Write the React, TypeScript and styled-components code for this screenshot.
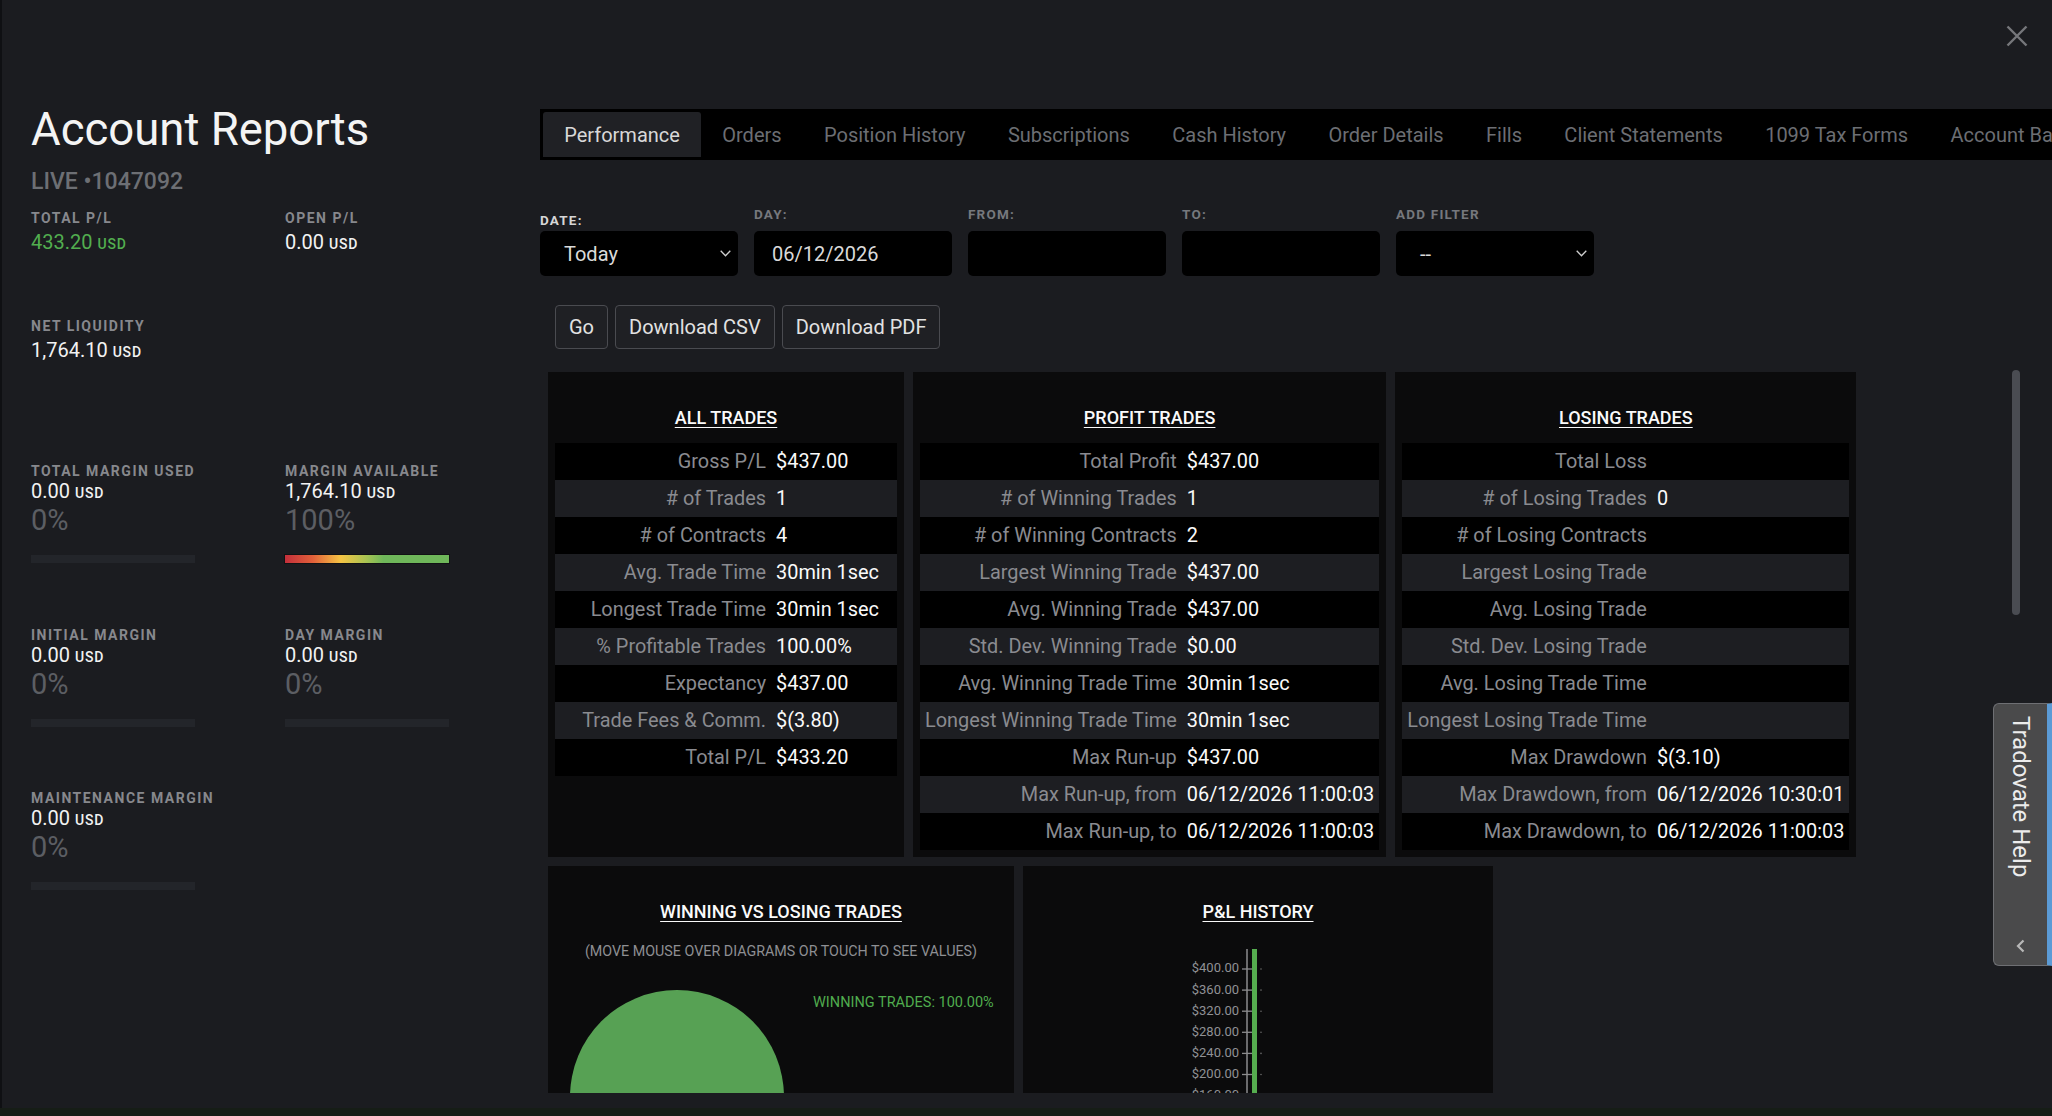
import React from 'react'
import styled, { createGlobalStyle } from 'styled-components'

type StatRow = { label: string; value?: string }

const tabs = [
  'Performance',
  'Orders',
  'Position History',
  'Subscriptions',
  'Cash History',
  'Order Details',
  'Fills',
  'Client Statements',
  '1099 Tax Forms',
  'Account Balances',
]

const allTrades: StatRow[] = [
  { label: 'Gross P/L', value: '$437.00' },
  { label: '# of Trades', value: '1' },
  { label: '# of Contracts', value: '4' },
  { label: 'Avg. Trade Time', value: '30min 1sec' },
  { label: 'Longest Trade Time', value: '30min 1sec' },
  { label: '% Profitable Trades', value: '100.00%' },
  { label: 'Expectancy', value: '$437.00' },
  { label: 'Trade Fees & Comm.', value: '$(3.80)' },
  { label: 'Total P/L', value: '$433.20' },
]

const profitTrades: StatRow[] = [
  { label: 'Total Profit', value: '$437.00' },
  { label: '# of Winning Trades', value: '1' },
  { label: '# of Winning Contracts', value: '2' },
  { label: 'Largest Winning Trade', value: '$437.00' },
  { label: 'Avg. Winning Trade', value: '$437.00' },
  { label: 'Std. Dev. Winning Trade', value: '$0.00' },
  { label: 'Avg. Winning Trade Time', value: '30min 1sec' },
  { label: 'Longest Winning Trade Time', value: '30min 1sec' },
  { label: 'Max Run-up', value: '$437.00' },
  { label: 'Max Run-up, from', value: '06/12/2026 11:00:03' },
  { label: 'Max Run-up, to', value: '06/12/2026 11:00:03' },
]

const losingTrades: StatRow[] = [
  { label: 'Total Loss' },
  { label: '# of Losing Trades', value: '0' },
  { label: '# of Losing Contracts' },
  { label: 'Largest Losing Trade' },
  { label: 'Avg. Losing Trade' },
  { label: 'Std. Dev. Losing Trade' },
  { label: 'Avg. Losing Trade Time' },
  { label: 'Longest Losing Trade Time' },
  { label: 'Max Drawdown', value: '$(3.10)' },
  { label: 'Max Drawdown, from', value: '06/12/2026 10:30:01' },
  { label: 'Max Drawdown, to', value: '06/12/2026 11:00:03' },
]

const margins = [
  { label: 'TOTAL MARGIN USED', value: '0.00', pct: '0%', gauge: false },
  { label: 'MARGIN AVAILABLE', value: '1,764.10', pct: '100%', gauge: true },
  { label: 'INITIAL MARGIN', value: '0.00', pct: '0%', gauge: false },
  { label: 'DAY MARGIN', value: '0.00', pct: '0%', gauge: false },
  { label: 'MAINTENANCE MARGIN', value: '0.00', pct: '0%', gauge: false },
]

const axisTicks = [400, 360, 320, 280, 240, 200, 160, 120, 80, 40, 0]

const GlobalStyle = createGlobalStyle`
  * { box-sizing: border-box; }
  html, body {
    margin: 0;
    padding: 0;
    background: #1b1c20;
  }
  body {
    font-family: Roboto, 'Liberation Sans', sans-serif;
    color: #e8e8e8;
    overflow: hidden;
  }
`

const Screen = styled.div`
  width: 2052px;
  height: 1116px;
  display: flex;
  flex-direction: column;
  overflow: hidden;
`

const Modal = styled.div`
  position: relative;
  flex: 1;
  display: flex;
  min-height: 0;
  background: #1b1c20;
  border-left: 2px solid #0f1013;
`

const BottomStrip = styled.div`
  height: 8px;
  flex-shrink: 0;
  background: #161d16;
`

/* ---------- sidebar ---------- */

const Sidebar = styled.aside`
  width: 538px;
  flex-shrink: 0;
  padding: 103px 0 0 29px;
`

const Title = styled.h1`
  margin: 0;
  font-size: 45.5px;
  line-height: 54px;
  font-weight: 400;
  color: #f4f4f4;
`

const AccountId = styled.div`
  margin-top: 11px;
  font-size: 23px;
  line-height: 27px;
  font-weight: 500;
  color: #6d6f74;
`

const StatGrid = styled.div<{ $top: number; $rowGap: number }>`
  display: grid;
  grid-template-columns: 254px 254px;
  row-gap: ${(p) => p.$rowGap}px;
  margin-top: ${(p) => p.$top}px;
`

const StatBlock = styled.div`
  display: flex;
  flex-direction: column;
`

const StatLabel = styled.div`
  font-size: 14px;
  line-height: 16px;
  font-weight: 700;
  letter-spacing: 1.5px;
  color: #87888d;
  white-space: nowrap;
`

const StatValue = styled.div<{ $green?: boolean; $gap: number; $lh: number }>`
  display: flex;
  align-items: baseline;
  gap: 5px;
  margin-top: ${(p) => p.$gap}px;
  font-size: 20px;
  line-height: ${(p) => p.$lh}px;
  color: ${(p) => (p.$green ? '#52ae4f' : '#f2f2f2')};
`

const Unit = styled.span`
  font-size: 14px;
  line-height: 16px;
  font-weight: 500;
  letter-spacing: 0.8px;
`

const Percent = styled.div`
  margin-top: 2px;
  font-size: 29px;
  line-height: 32px;
  color: #5c5e63;
`

const Gauge = styled.div<{ $filled: boolean }>`
  margin-top: 19px;
  width: 164px;
  height: 8px;
  background: ${(p) =>
    p.$filled
      ? 'linear-gradient(to right, #c42f3b 0%, #e2603a 17%, #f5c444 34%, #a6c353 50%, #6fb75a 60%, #6fb75a 100%)'
      : '#23252a'};
  box-shadow: ${(p) => (p.$filled ? '0 0 0 1px rgba(0,0,0,0.35)' : 'none')};
`

/* ---------- main ---------- */

const Main = styled.main`
  flex: 1;
  min-width: 0;
  display: flex;
  flex-direction: column;
  padding: 109px 0 15px;
`

const TabBar = styled.nav`
  height: 51px;
  flex-shrink: 0;
  display: flex;
  padding: 3px 0 3px 3px;
  background: #000;
  overflow: hidden;
`

const Tab = styled.div<{ $active?: boolean }>`
  height: 45px;
  display: flex;
  align-items: center;
  padding: 0 21.2px;
  font-size: 20px;
  white-space: nowrap;
  border-radius: 3px 3px 0 0;
  color: ${(p) => (p.$active ? '#d8d8d8' : '#6c6e73')};
  background: ${(p) => (p.$active ? '#202125' : 'transparent')};
`

const FilterRow = styled.div`
  display: flex;
  align-items: flex-end;
  gap: 16px;
  margin-top: 46px;
`

const Field = styled.label`
  width: 198px;
  display: flex;
  flex-direction: column;
`

const FieldLabel = styled.span<{ $strong?: boolean }>`
  margin-bottom: ${(p) => (p.$strong ? 3 : 9)}px;
  font-size: 13.5px;
  line-height: 16px;
  font-weight: 700;
  letter-spacing: 1.2px;
  color: ${(p) => (p.$strong ? '#d6d6d6' : '#76787d')};
`

const InputBox = styled.div<{ $pad: number }>`
  height: 45px;
  display: flex;
  align-items: center;
  justify-content: space-between;
  padding: 0 7px 0 ${(p) => p.$pad}px;
  background: #000;
  border-radius: 5px;
  font-size: 20px;
  color: #dadada;
`

const ButtonRow = styled.div`
  display: flex;
  gap: 7px;
  margin-top: 29px;
  padding-left: 15px;
`

const Button = styled.button`
  height: 44px;
  padding: 0 13px;
  background: #1f2024;
  border: 1px solid #4a4b50;
  border-radius: 4px;
  font-family: Roboto, 'Liberation Sans', sans-serif;
  font-size: 20px;
  color: #e2e2e2;
`

const ReportPane = styled.div`
  flex: 1;
  min-height: 0;
  display: flex;
  margin-top: 17px;
`

const ScrollArea = styled.div`
  flex: 1;
  min-width: 0;
  padding: 6px 0 0 8px;
  overflow: hidden;
`

const ScrollRail = styled.div`
  width: 16px;
  flex-shrink: 0;
  margin-right: 28px;
  padding-top: 4px;
  display: flex;
  justify-content: center;
`

const ScrollThumb = styled.div`
  width: 8px;
  height: 245px;
  border-radius: 4px;
  background: #4a4c52;
`

const CardRow = styled.div`
  display: flex;
  gap: 9px;
  align-items: stretch;
`

const Card = styled.section`
  min-width: 356px;
  display: flex;
  flex-direction: column;
  padding: 0 7px 7px;
  background: #0b0b0c;
`

const CardTitle = styled.h2<{ $after: number }>`
  margin: 0;
  padding: 34px 0 ${(p) => p.$after}px;
  text-align: center;
  font-size: 18px;
  line-height: 24px;
  font-weight: 500;
  color: #fafafa;
  text-decoration: underline;
  text-underline-offset: 3px;
`

const StatsTable = styled.table`
  width: 100%;
  border-collapse: collapse;
  font-size: 19.9px;
  tr:nth-child(odd) {
    background: #000;
  }
  tr:nth-child(even) {
    background: #1d1e22;
  }
`

const LabelCell = styled.td`
  height: 37px;
  padding: 0 5px;
  text-align: right;
  white-space: nowrap;
  color: #8a8b90;
`

const ValueCell = styled.td`
  height: 37px;
  padding: 0 5px;
  white-space: nowrap;
  color: #fafafa;
`

const ChartRow = styled.div`
  display: flex;
  gap: 9px;
  margin-top: 9px;
`

const ChartCard = styled.section<{ $width: number }>`
  width: ${(p) => p.$width}px;
  height: 470px;
  display: flex;
  flex-direction: column;
  background: #0b0b0c;
  overflow: hidden;
`

const ChartHint = styled.div`
  text-align: center;
  font-size: 14.3px;
  line-height: 18px;
  color: #8e8f93;
`

const PieRow = styled.div`
  display: flex;
  align-items: flex-start;
  margin-top: 30px;
  padding-left: 22px;
`

const Legend = styled.div`
  margin: 4px 0 0 29px;
  font-size: 14.5px;
  line-height: 18px;
  color: #50ad4e;
`

const CloseButton = styled.button`
  position: absolute;
  top: 25px;
  right: 24px;
  width: 22px;
  height: 22px;
  padding: 0;
  border: none;
  background: none;
`

const HelpTab = styled.aside`
  position: absolute;
  right: 0;
  top: 703px;
  width: 59px;
  height: 263px;
  display: flex;
  flex-direction: column;
  align-items: center;
  justify-content: space-between;
  padding: 12px 0 12px;
  background: #4a4a4b;
  border: 1px solid #6e6f73;
  border-right: 5px solid #5b9bd6;
  border-radius: 6px 0 0 6px;
`

const HelpText = styled.span`
  writing-mode: vertical-rl;
  font-size: 24px;
  line-height: 28px;
  color: #ececec;
`

const Chevron = ({ color = '#cfcfcf' }: { color?: string }) => (
  <svg width="11" height="7" viewBox="0 0 11 7">
    <path d="M0.7 0.7 L5.5 5.8 L10.3 0.7" fill="none" stroke={color} strokeWidth="1.3" />
  </svg>
)

const StatsCard = ({ title, rows }: { title: string; rows: StatRow[] }) => (
  <Card>
    <CardTitle $after={13}>{title}</CardTitle>
    <StatsTable>
      <tbody>
        {rows.map((r) => (
          <tr key={r.label}>
            <LabelCell>{r.label}</LabelCell>
            <ValueCell>{r.value ?? ''}</ValueCell>
          </tr>
        ))}
      </tbody>
    </StatsTable>
  </Card>
)

const PnlChart = () => (
  <svg width="470" height="300" style={{ marginTop: 25, display: 'block' }}>
    <line x1="224" y1="0" x2="224" y2="232" stroke="#8c8c8e" strokeWidth="1.5" />
    <rect x="229" y="0" width="5" height="232" fill="#55ad4f" />
    {axisTicks.map((v, i) => {
      const y = 20 + i * 21.1
      return (
        <g key={v}>
          <text
            x="216"
            y={y}
            textAnchor="end"
            dominantBaseline="middle"
            fontSize="13"
            fontFamily="Roboto, sans-serif"
            fill="#909195"
          >
            ${v}.00
          </text>
          <line x1="219" y1={y} x2="229" y2={y} stroke="#8c8c8e" strokeWidth="1.3" />
          <circle cx="238" cy={y} r="0.8" fill="#6a6a6a" />
        </g>
      )
    })}
  </svg>
)

export default function App() {
  return (
    <Screen>
      <GlobalStyle />
      <Modal>
        <Sidebar>
          <Title>Account Reports</Title>
          <AccountId>LIVE •1047092</AccountId>

          <StatGrid $top={15} $rowGap={64}>
            <StatBlock>
              <StatLabel>TOTAL P/L</StatLabel>
              <StatValue $green $gap={4} $lh={24}>
                433.20 <Unit>USD</Unit>
              </StatValue>
            </StatBlock>
            <StatBlock>
              <StatLabel>OPEN P/L</StatLabel>
              <StatValue $gap={4} $lh={24}>
                0.00 <Unit>USD</Unit>
              </StatValue>
            </StatBlock>
            <StatBlock>
              <StatLabel>NET LIQUIDITY</StatLabel>
              <StatValue $gap={4} $lh={24}>
                1,764.10 <Unit>USD</Unit>
              </StatValue>
            </StatBlock>
          </StatGrid>

          <StatGrid $top={101} $rowGap={63.5}>
            {margins.map((m) => (
              <StatBlock key={m.label}>
                <StatLabel>{m.label}</StatLabel>
                <StatValue $gap={1} $lh={22}>
                  {m.value} <Unit>USD</Unit>
                </StatValue>
                <Percent>{m.pct}</Percent>
                <Gauge $filled={m.gauge} />
              </StatBlock>
            ))}
          </StatGrid>
        </Sidebar>

        <Main>
          <TabBar>
            {tabs.map((t, i) => (
              <Tab key={t} $active={i === 0}>
                {t}
              </Tab>
            ))}
          </TabBar>

          <FilterRow>
            <Field>
              <FieldLabel $strong>DATE:</FieldLabel>
              <InputBox $pad={24}>
                <span>Today</span>
                <Chevron />
              </InputBox>
            </Field>
            <Field>
              <FieldLabel>DAY:</FieldLabel>
              <InputBox $pad={18}>06/12/2026</InputBox>
            </Field>
            <Field>
              <FieldLabel>FROM:</FieldLabel>
              <InputBox $pad={18} />
            </Field>
            <Field>
              <FieldLabel>TO:</FieldLabel>
              <InputBox $pad={18} />
            </Field>
            <Field>
              <FieldLabel>ADD FILTER</FieldLabel>
              <InputBox $pad={24}>
                <span>--</span>
                <Chevron />
              </InputBox>
            </Field>
          </FilterRow>

          <ButtonRow>
            <Button>Go</Button>
            <Button>Download CSV</Button>
            <Button>Download PDF</Button>
          </ButtonRow>

          <ReportPane>
            <ScrollArea>
              <CardRow>
                <StatsCard title="ALL TRADES" rows={allTrades} />
                <StatsCard title="PROFIT TRADES" rows={profitTrades} />
                <StatsCard title="LOSING TRADES" rows={losingTrades} />
              </CardRow>

              <ChartRow>
                <ChartCard $width={466}>
                  <CardTitle $after={18}>WINNING VS LOSING TRADES</CardTitle>
                  <ChartHint>(MOVE MOUSE OVER DIAGRAMS OR TOUCH TO SEE VALUES)</ChartHint>
                  <PieRow>
                    <svg width="214" height="214" viewBox="0 0 214 214">
                      <circle cx="107" cy="107" r="107" fill="#57a154" />
                    </svg>
                    <Legend>WINNING TRADES: 100.00%</Legend>
                  </PieRow>
                </ChartCard>
                <ChartCard $width={470}>
                  <CardTitle $after={0}>P&amp;L HISTORY</CardTitle>
                  <PnlChart />
                </ChartCard>
              </ChartRow>
            </ScrollArea>
            <ScrollRail>
              <ScrollThumb />
            </ScrollRail>
          </ReportPane>
        </Main>

        <CloseButton aria-label="Close">
          <svg width="22" height="22" viewBox="0 0 22 22">
            <path d="M1.5 1.5 L20.5 20.5 M20.5 1.5 L1.5 20.5" stroke="#76777b" strokeWidth="2.4" />
          </svg>
        </CloseButton>

        <HelpTab>
          <HelpText>Tradovate Help</HelpText>
          <svg width="9" height="14" viewBox="0 0 9 14">
            <path d="M7.5 1.5 L2 7 L7.5 12.5" fill="none" stroke="#b8b8b8" strokeWidth="2.2" />
          </svg>
        </HelpTab>
      </Modal>
      <BottomStrip />
    </Screen>
  )
}
